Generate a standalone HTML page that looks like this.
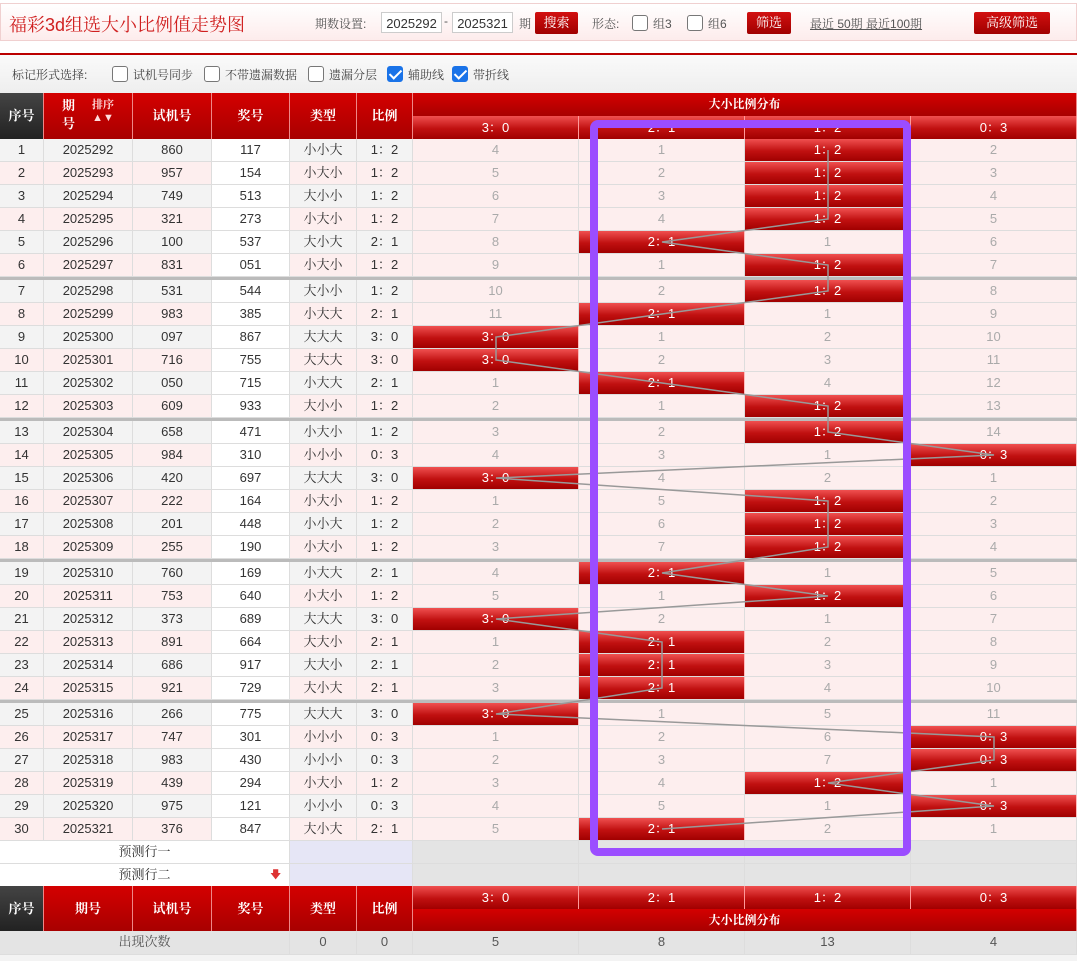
<!DOCTYPE html>
<html><head><meta charset="utf-8">
<style>
*{margin:0;padding:0}
body{width:1080px;height:961px;position:relative;overflow:hidden;background:#fff;font-family:"Liberation Sans","Noto Serif CJK SC",serif;font-size:13px;color:#333}
.title{position:absolute;left:0;top:3px;width:1077px;height:38px;box-sizing:border-box;border:1px solid #f0d0d0;background:linear-gradient(#fff,#fdecec)}
.title h1{position:absolute;left:8px;top:7px;font-size:18px;font-weight:normal;color:#d02020;letter-spacing:0px}
.tb{position:absolute;top:12px;font-size:12px;color:#555}
.inp{position:absolute;top:12px;height:21px;width:61px;border:1px solid #ccc;background:#fff;font-size:13px;line-height:21px;text-align:center;box-sizing:border-box}
.btn{position:absolute;top:12px;height:22px;background:linear-gradient(#d21010,#a00000);color:#fff;font-size:13px;line-height:22px;text-align:center;border-radius:2px}
.cb{position:absolute;width:16px;height:16px;border:1px solid #777;border-radius:3px;background:#fff;box-sizing:border-box}
.cb.on{background:#1a73e8;border-color:#1a73e8}
.cb.on:after{content:"";position:absolute;left:4px;top:0px;width:5px;height:10px;border:solid #fff;border-width:0 2px 2px 0;transform:rotate(45deg)}
.redline{position:absolute;left:0;top:53px;width:1077px;height:2px;background:#b00}
.tool{position:absolute;left:0;top:55px;width:1077px;height:38px;background:linear-gradient(#fafafa,#eee)}
.tool span{position:absolute;top:11px;font-size:12px;color:#444}
.hd{position:absolute;box-sizing:border-box;border-right:1px solid #e88;color:#fff;text-align:center;font-weight:bold;background:linear-gradient(#d40000,#a80000)}
.rc{background:linear-gradient(#f05050,#c01010 55%,#a00000);color:#fff;font-weight:normal;border-right:1px solid #f99}
#rows{position:absolute;left:0;top:139px;width:1077px}
.r{display:flex;height:23px;box-sizing:border-box;border-bottom:1px solid #ddd;line-height:22px}
.r>div{box-sizing:border-box;border-right:1px solid #ddd;text-align:center;flex:none}
.a{width:44px}.b{width:89px}.c{width:79px}.d{width:78px}.e{width:67px}.f{width:56px}.g{width:166px;color:#aaa;background:#fdeeee}
.r.o>div{background:#f3f3f3}.r.p>div{background:#fdeeee}
.r>div.d{background:#fff}
.r>div.g{background:#fdeeee}
.r>div.x{background:linear-gradient(#f05050,#c01010 55%,#a00000);color:#fff;border-right:1px solid #fbb}
.sep{height:3px;background:#bbb}
</style></head><body>
<div class="title"><h1>福彩3d组选大小比例值走势图</h1></div>
<span class="tb" style="left:315px;top:15px">期数设置:</span>
<div class="inp" style="left:381px">2025292</div>
<span class="tb" style="left:444px;top:14px">-</span>
<div class="inp" style="left:452px">2025321</div>
<span class="tb" style="left:519px;top:15px">期</span>
<div class="btn" style="left:535px;width:43px">搜索</div>
<span class="tb" style="left:592px;top:15px">形态:</span>
<div class="cb" style="left:632px;top:15px"></div><span class="tb" style="left:653px;top:15px">组3</span>
<div class="cb" style="left:687px;top:15px"></div><span class="tb" style="left:708px;top:15px">组6</span>
<div class="btn" style="left:747px;width:44px">筛选</div>
<span class="tb" style="left:810px;top:15px;text-decoration:underline">最近 50期 最近100期</span>
<div class="btn" style="left:974px;width:76px">高级筛选</div>
<div class="redline"></div>
<div class="tool">
<span style="left:12px">标记形式选择:</span>
<div class="cb" style="left:112px;top:11px"></div><span style="left:133px">试机号同步</span>
<div class="cb" style="left:204px;top:11px"></div><span style="left:225px">不带遗漏数据</span>
<div class="cb" style="left:308px;top:11px"></div><span style="left:329px">遗漏分层</span>
<div class="cb on" style="left:387px;top:11px"></div><span style="left:408px">辅助线</span>
<div class="cb on" style="left:452px;top:11px"></div><span style="left:473px">带折线</span>
</div>
<!-- header -->
<div class="hd" style="left:0;top:93px;width:44px;height:46px;line-height:46px;background:linear-gradient(#444,#222)">序号</div>
<div class="hd" style="left:44px;top:93px;width:89px;height:46px"><div style="position:absolute;left:18px;top:4px;line-height:18px">期<br>号</div><div style="position:absolute;left:48px;top:6px;font-size:11px;line-height:13px;color:#fdd">排序<br>▲▼</div></div>
<div class="hd" style="left:133px;top:93px;width:79px;height:46px;line-height:46px">试机号</div>
<div class="hd" style="left:212px;top:93px;width:78px;height:46px;line-height:46px">奖号</div>
<div class="hd" style="left:290px;top:93px;width:67px;height:46px;line-height:46px">类型</div>
<div class="hd" style="left:357px;top:93px;width:56px;height:46px;line-height:46px">比例</div>
<div class="hd" style="left:413px;top:93px;width:664px;height:23px;line-height:23px;font-size:12px">大小比例分布</div>
<div class="hd rc" style="left:413px;top:116px;width:166px;height:23px;line-height:23px">3：0</div>
<div class="hd rc" style="left:579px;top:116px;width:166px;height:23px;line-height:23px">2：1</div>
<div class="hd rc" style="left:745px;top:116px;width:166px;height:23px;line-height:23px">1：2</div>
<div class="hd rc" style="left:911px;top:116px;width:166px;height:23px;line-height:23px">0：3</div>
<div id="rows">
<div class="r o"><div class="a">1</div><div class="b">2025292</div><div class="c">860</div><div class="d">117</div><div class="e">小小大</div><div class="f">1：2</div><div class="g">4</div><div class="g">1</div><div class="g x">1：2</div><div class="g">2</div></div>
<div class="r p"><div class="a">2</div><div class="b">2025293</div><div class="c">957</div><div class="d">154</div><div class="e">小大小</div><div class="f">1：2</div><div class="g">5</div><div class="g">2</div><div class="g x">1：2</div><div class="g">3</div></div>
<div class="r o"><div class="a">3</div><div class="b">2025294</div><div class="c">749</div><div class="d">513</div><div class="e">大小小</div><div class="f">1：2</div><div class="g">6</div><div class="g">3</div><div class="g x">1：2</div><div class="g">4</div></div>
<div class="r p"><div class="a">4</div><div class="b">2025295</div><div class="c">321</div><div class="d">273</div><div class="e">小大小</div><div class="f">1：2</div><div class="g">7</div><div class="g">4</div><div class="g x">1：2</div><div class="g">5</div></div>
<div class="r o"><div class="a">5</div><div class="b">2025296</div><div class="c">100</div><div class="d">537</div><div class="e">大小大</div><div class="f">2：1</div><div class="g">8</div><div class="g x">2：1</div><div class="g">1</div><div class="g">6</div></div>
<div class="r p"><div class="a">6</div><div class="b">2025297</div><div class="c">831</div><div class="d">051</div><div class="e">小大小</div><div class="f">1：2</div><div class="g">9</div><div class="g">1</div><div class="g x">1：2</div><div class="g">7</div></div>
<div class="sep"></div>
<div class="r o"><div class="a">7</div><div class="b">2025298</div><div class="c">531</div><div class="d">544</div><div class="e">大小小</div><div class="f">1：2</div><div class="g">10</div><div class="g">2</div><div class="g x">1：2</div><div class="g">8</div></div>
<div class="r p"><div class="a">8</div><div class="b">2025299</div><div class="c">983</div><div class="d">385</div><div class="e">小大大</div><div class="f">2：1</div><div class="g">11</div><div class="g x">2：1</div><div class="g">1</div><div class="g">9</div></div>
<div class="r o"><div class="a">9</div><div class="b">2025300</div><div class="c">097</div><div class="d">867</div><div class="e">大大大</div><div class="f">3：0</div><div class="g x">3：0</div><div class="g">1</div><div class="g">2</div><div class="g">10</div></div>
<div class="r p"><div class="a">10</div><div class="b">2025301</div><div class="c">716</div><div class="d">755</div><div class="e">大大大</div><div class="f">3：0</div><div class="g x">3：0</div><div class="g">2</div><div class="g">3</div><div class="g">11</div></div>
<div class="r o"><div class="a">11</div><div class="b">2025302</div><div class="c">050</div><div class="d">715</div><div class="e">小大大</div><div class="f">2：1</div><div class="g">1</div><div class="g x">2：1</div><div class="g">4</div><div class="g">12</div></div>
<div class="r p"><div class="a">12</div><div class="b">2025303</div><div class="c">609</div><div class="d">933</div><div class="e">大小小</div><div class="f">1：2</div><div class="g">2</div><div class="g">1</div><div class="g x">1：2</div><div class="g">13</div></div>
<div class="sep"></div>
<div class="r o"><div class="a">13</div><div class="b">2025304</div><div class="c">658</div><div class="d">471</div><div class="e">小大小</div><div class="f">1：2</div><div class="g">3</div><div class="g">2</div><div class="g x">1：2</div><div class="g">14</div></div>
<div class="r p"><div class="a">14</div><div class="b">2025305</div><div class="c">984</div><div class="d">310</div><div class="e">小小小</div><div class="f">0：3</div><div class="g">4</div><div class="g">3</div><div class="g">1</div><div class="g x">0：3</div></div>
<div class="r o"><div class="a">15</div><div class="b">2025306</div><div class="c">420</div><div class="d">697</div><div class="e">大大大</div><div class="f">3：0</div><div class="g x">3：0</div><div class="g">4</div><div class="g">2</div><div class="g">1</div></div>
<div class="r p"><div class="a">16</div><div class="b">2025307</div><div class="c">222</div><div class="d">164</div><div class="e">小大小</div><div class="f">1：2</div><div class="g">1</div><div class="g">5</div><div class="g x">1：2</div><div class="g">2</div></div>
<div class="r o"><div class="a">17</div><div class="b">2025308</div><div class="c">201</div><div class="d">448</div><div class="e">小小大</div><div class="f">1：2</div><div class="g">2</div><div class="g">6</div><div class="g x">1：2</div><div class="g">3</div></div>
<div class="r p"><div class="a">18</div><div class="b">2025309</div><div class="c">255</div><div class="d">190</div><div class="e">小大小</div><div class="f">1：2</div><div class="g">3</div><div class="g">7</div><div class="g x">1：2</div><div class="g">4</div></div>
<div class="sep"></div>
<div class="r o"><div class="a">19</div><div class="b">2025310</div><div class="c">760</div><div class="d">169</div><div class="e">小大大</div><div class="f">2：1</div><div class="g">4</div><div class="g x">2：1</div><div class="g">1</div><div class="g">5</div></div>
<div class="r p"><div class="a">20</div><div class="b">2025311</div><div class="c">753</div><div class="d">640</div><div class="e">小大小</div><div class="f">1：2</div><div class="g">5</div><div class="g">1</div><div class="g x">1：2</div><div class="g">6</div></div>
<div class="r o"><div class="a">21</div><div class="b">2025312</div><div class="c">373</div><div class="d">689</div><div class="e">大大大</div><div class="f">3：0</div><div class="g x">3：0</div><div class="g">2</div><div class="g">1</div><div class="g">7</div></div>
<div class="r p"><div class="a">22</div><div class="b">2025313</div><div class="c">891</div><div class="d">664</div><div class="e">大大小</div><div class="f">2：1</div><div class="g">1</div><div class="g x">2：1</div><div class="g">2</div><div class="g">8</div></div>
<div class="r o"><div class="a">23</div><div class="b">2025314</div><div class="c">686</div><div class="d">917</div><div class="e">大大小</div><div class="f">2：1</div><div class="g">2</div><div class="g x">2：1</div><div class="g">3</div><div class="g">9</div></div>
<div class="r p"><div class="a">24</div><div class="b">2025315</div><div class="c">921</div><div class="d">729</div><div class="e">大小大</div><div class="f">2：1</div><div class="g">3</div><div class="g x">2：1</div><div class="g">4</div><div class="g">10</div></div>
<div class="sep"></div>
<div class="r o"><div class="a">25</div><div class="b">2025316</div><div class="c">266</div><div class="d">775</div><div class="e">大大大</div><div class="f">3：0</div><div class="g x">3：0</div><div class="g">1</div><div class="g">5</div><div class="g">11</div></div>
<div class="r p"><div class="a">26</div><div class="b">2025317</div><div class="c">747</div><div class="d">301</div><div class="e">小小小</div><div class="f">0：3</div><div class="g">1</div><div class="g">2</div><div class="g">6</div><div class="g x">0：3</div></div>
<div class="r o"><div class="a">27</div><div class="b">2025318</div><div class="c">983</div><div class="d">430</div><div class="e">小小小</div><div class="f">0：3</div><div class="g">2</div><div class="g">3</div><div class="g">7</div><div class="g x">0：3</div></div>
<div class="r p"><div class="a">28</div><div class="b">2025319</div><div class="c">439</div><div class="d">294</div><div class="e">小大小</div><div class="f">1：2</div><div class="g">3</div><div class="g">4</div><div class="g x">1：2</div><div class="g">1</div></div>
<div class="r o"><div class="a">29</div><div class="b">2025320</div><div class="c">975</div><div class="d">121</div><div class="e">小小小</div><div class="f">0：3</div><div class="g">4</div><div class="g">5</div><div class="g">1</div><div class="g x">0：3</div></div>
<div class="r p"><div class="a">30</div><div class="b">2025321</div><div class="c">376</div><div class="d">847</div><div class="e">大小大</div><div class="f">2：1</div><div class="g">5</div><div class="g x">2：1</div><div class="g">2</div><div class="g">1</div></div>
<div class="r"><div style="width:290px;background:#fff">预测行一</div><div style="width:123px;background:#e6e6f6"></div><div class="g" style="background:#e4e4e4"></div><div class="g" style="background:#e4e4e4"></div><div class="g" style="background:#e4e4e4"></div><div class="g" style="background:#e4e4e4"></div></div>
<div class="r"><div style="width:290px;background:#fff;position:relative">预测行二<span style="position:absolute;left:270px;top:0;color:#d33;font-size:11px">🡇</span></div><div style="width:123px;background:#e6e6f6"></div><div class="g" style="background:#e4e4e4"></div><div class="g" style="background:#e4e4e4"></div><div class="g" style="background:#e4e4e4"></div><div class="g" style="background:#e4e4e4"></div></div>
</div>
<!-- bottom header -->
<div class="hd" style="left:0;top:886px;width:44px;height:45px;line-height:45px;background:linear-gradient(#444,#222)">序号</div>
<div class="hd" style="left:44px;top:886px;width:89px;height:45px;line-height:45px">期号</div>
<div class="hd" style="left:133px;top:886px;width:79px;height:45px;line-height:45px">试机号</div>
<div class="hd" style="left:212px;top:886px;width:78px;height:45px;line-height:45px">奖号</div>
<div class="hd" style="left:290px;top:886px;width:67px;height:45px;line-height:45px">类型</div>
<div class="hd" style="left:357px;top:886px;width:56px;height:45px;line-height:45px">比例</div>
<div class="hd rc" style="left:413px;top:886px;width:166px;height:23px;line-height:23px">3：0</div>
<div class="hd rc" style="left:579px;top:886px;width:166px;height:23px;line-height:23px">2：1</div>
<div class="hd rc" style="left:745px;top:886px;width:166px;height:23px;line-height:23px">1：2</div>
<div class="hd rc" style="left:911px;top:886px;width:166px;height:23px;line-height:23px">0：3</div>
<div class="hd" style="left:413px;top:909px;width:664px;height:22px;line-height:22px;font-size:12px">大小比例分布</div>
<div class="r" style="position:absolute;left:0;top:931px;width:1077px;height:24px;color:#555">
<div style="width:290px;background:#e4e4e4">出现次数</div><div class="e" style="background:#e4e4e4">0</div><div class="f" style="background:#e4e4e4">0</div><div class="g" style="background:#e4e4e4;color:#555">5</div><div class="g" style="background:#e4e4e4;color:#555">8</div><div class="g" style="background:#e4e4e4;color:#555">13</div><div class="g" style="background:#e4e4e4;color:#555">4</div></div>
<div style="position:absolute;left:0;top:955px;width:1077px;height:6px;background:#f3f3f3"></div>
<svg style="position:absolute;left:0;top:0" width="1080" height="961">
<polyline fill="none" stroke="#999" stroke-width="1.5" points="828,150 828,173 828,196 828,219 662,242 828,265 828,291 662,314 496,337 496,360 662,383 828,406 828,432 994,455 496,478 828,501 828,524 828,547 662,573 828,596 496,619 662,642 662,665 662,688 496,714 994,737 994,760 828,783 994,806 662,829"/>
<rect x="594" y="124" width="313" height="728" rx="4" fill="none" stroke="#9b4dff" stroke-width="8"/>
</svg>
</body></html>
